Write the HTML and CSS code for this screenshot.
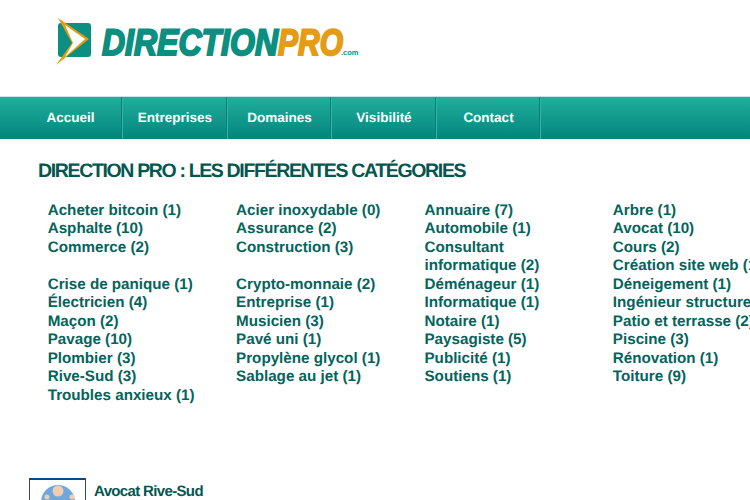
FILE: index.html
```html
<!DOCTYPE html>
<html lang="fr">
<head>
    <meta charset="UTF-8">
    <title>Direction Pro</title>
    <link rel="stylesheet" href="styles.css">
</head>
<body>
    <header class="logo-bar">
        <svg class="logo" width="310" height="56" viewBox="0 0 310 56">
            <rect x="2" y="7" width="33" height="34" rx="3" fill="#0a8f80"/>
            <path d="M2 2 L33 23 L0 49 L16 27 Z" fill="#e59c14"/>
            <path d="M9 9 L29 23 L9 41 L17 27 Z" fill="#fff"/>
            <text class="logo-name" x="46" y="38.5" textLength="176" lengthAdjust="spacingAndGlyphs">DIRECTION</text>
            <text class="logo-pro" x="222" y="38.5" textLength="65" lengthAdjust="spacingAndGlyphs">PRO</text>
            <text class="logo-com" x="285" y="39">.com</text>
        </svg>
    </header>

    <nav class="menu">
        <a href="#">Accueil</a>
        <a href="#">Entreprises</a>
        <a href="#">Domaines</a>
        <a href="#">Visibilité</a>
        <a href="#">Contact</a>
    </nav>

    <main class="content">
        <h1>DIRECTION PRO : LES DIFFÉRENTES CATÉGORIES</h1>
        <div class="categories">
            <ul>
                <li><a href="#">Acheter bitcoin (1)</a></li>
                <li><a href="#">Asphalte (10)</a></li>
                <li><a href="#">Commerce (2)</a></li>
                <li class="blank"></li>
                <li><a href="#">Crise de panique (1)</a></li>
                <li><a href="#">Électricien (4)</a></li>
                <li><a href="#">Maçon (2)</a></li>
                <li><a href="#">Pavage (10)</a></li>
                <li><a href="#">Plombier (3)</a></li>
                <li><a href="#">Rive-Sud (3)</a></li>
                <li><a href="#">Troubles anxieux (1)</a></li>
            </ul>
            <ul>
                <li><a href="#">Acier inoxydable (0)</a></li>
                <li><a href="#">Assurance (2)</a></li>
                <li><a href="#">Construction (3)</a></li>
                <li class="blank"></li>
                <li><a href="#">Crypto-monnaie (2)</a></li>
                <li><a href="#">Entreprise (1)</a></li>
                <li><a href="#">Musicien (3)</a></li>
                <li><a href="#">Pavé uni (1)</a></li>
                <li><a href="#">Propylène glycol (1)</a></li>
                <li><a href="#">Sablage au jet (1)</a></li>
            </ul>
            <ul>
                <li><a href="#">Annuaire (7)</a></li>
                <li><a href="#">Automobile (1)</a></li>
                <li><a href="#">Consultant informatique (2)</a></li>
                <li><a href="#">Déménageur (1)</a></li>
                <li><a href="#">Informatique (1)</a></li>
                <li><a href="#">Notaire (1)</a></li>
                <li><a href="#">Paysagiste (5)</a></li>
                <li><a href="#">Publicité (1)</a></li>
                <li><a href="#">Soutiens (1)</a></li>
            </ul>
            <ul>
                <li><a href="#">Arbre (1)</a></li>
                <li><a href="#">Avocat (10)</a></li>
                <li><a href="#">Cours (2)</a></li>
                <li><a href="#">Création site web (1)</a></li>
                <li><a href="#">Déneigement (1)</a></li>
                <li><a href="#">Ingénieur structure (1)</a></li>
                <li><a href="#">Patio et terrasse (2)</a></li>
                <li><a href="#">Piscine (3)</a></li>
                <li><a href="#">Rénovation (1)</a></li>
                <li><a href="#">Toiture (9)</a></li>
            </ul>
        </div>

        <article class="teaser">
            <div class="thumb">
                <svg width="54" height="58" viewBox="0 0 54 58">
                    <circle cx="28" cy="22" r="17" fill="#6fa8dc"/>
                    <path d="M16 34 Q16 21 28 21 Q40 21 40 34 Z" fill="#3c4650"/>
                    <path d="M24 21 L32 21 L28 30 Z" fill="#fff"/>
                    <circle cx="28" cy="11" r="5.5" fill="#f2cdb0"/>
                    <circle cx="17" cy="17" r="2.5" fill="#f2cdb0"/>
                    <circle cx="42" cy="17" r="2.5" fill="#f2cdb0"/>
                </svg>
            </div>
            <h2>Avocat Rive-Sud</h2>
        </article>
    </main>
</body>
</html>
```

FILE: styles.css
```css
html, body {
    margin: 0;
    height: 500px;
    overflow: hidden;
}
body {
    width: 750px;
    background: white;
    font-family: "Liberation Sans", Arial, sans-serif;
    color: #04645c;
    text-rendering: geometricPrecision;
}
a {
    color: inherit;
    text-decoration: none;
}
.logo-bar {
    height: 96px;
    padding-left: 56px;
    box-sizing: border-box;
    padding-top: 16px;
}
.logo {
    display: block;
}
.logo-name, .logo-pro {
    font-size: 37px;
    font-weight: bold;
    font-style: italic;
    stroke-width: 2px;
}
.logo-name {
    fill: #0a8f80;
    stroke: #0a8f80;
}
.logo-pro {
    fill: #e59c14;
    stroke: #e59c14;
}
.logo-com {
    font-size: 7.5px;
    font-weight: bold;
    fill: #0a8f80;
}
.menu {
    display: flex;
    height: 43px;
    padding-left: 17.5px;
    background: linear-gradient(#22ae9f, #02857b);
    border-top: 1px solid #c5e6e2;
    box-sizing: border-box;
}
.menu a {
    width: 101px;
    padding-left: 2.5px;
    border-right: 1px solid #0c7f75;
    box-shadow: 1px 0 0 #33b3a6;
    color: white;
    font-size: 13.5px;
    font-weight: bold;
    line-height: 41px;
    text-align: center;
}
.content {
    padding: 22.5px 0 0 38px;
}
h1 {
    margin: 0 0 22px;
    font-size: 19.5px;
    line-height: 18px;
    letter-spacing: -1.35px;
    color: #04564f;
}
.categories {
    display: flex;
    padding-left: 9.7px;
    width: 900px;
}
.categories ul {
    flex: none;
    width: 188.4px;
    margin: 0;
    padding: 0 28px 0 0;
    box-sizing: border-box;
    list-style: none;
    font-size: 15.2px;
    font-weight: bold;
    line-height: 18.5px;
}
.categories ul:last-child {
    width: 260px;
}
.blank {
    height: 18.5px;
}
.teaser {
    display: flex;
    gap: 8px;
    margin: 72.5px 0 0 -9px;
}
.thumb {
    width: 57px;
    height: 60px;
    border: 1px solid #33475c;
    border-top: 2px solid #10487f;
    box-sizing: border-box;
    flex: none;
}
.teaser h2 {
    margin: 5px 0 0;
    font-size: 15px;
    letter-spacing: -0.65px;
    color: #04564f;
}
```
